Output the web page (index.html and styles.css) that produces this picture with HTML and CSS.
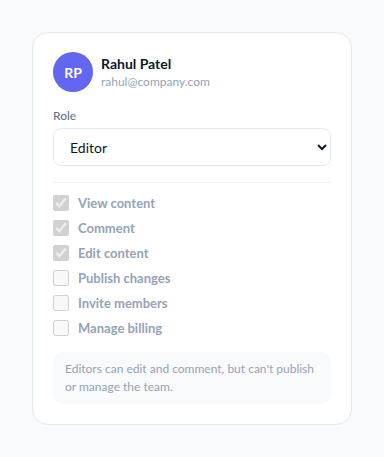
FILE: index.html
```html
<!DOCTYPE html>
<html>
<head>
    <title>Member role</title>
    <link rel="stylesheet" href="styles.css">
</head>
<body>
    <div class="card">
        <div class="member">
            <div class="avatar">RP</div>
            <div class="member-info">
                <div class="member-name">Rahul Patel</div>
                <div class="member-email">rahul@company.com</div>
            </div>
        </div>

        <label class="field-label" for="role">Role</label>
        <select id="role" class="role-select">
            <option>Viewer</option>
            <option>Commenter</option>
            <option selected>Editor</option>
            <option>Admin</option>
        </select>

        <hr class="divider">

        <ul class="perm-list">
            <li class="perm"><input type="checkbox" checked disabled><span>View content</span></li>
            <li class="perm"><input type="checkbox" checked disabled><span>Comment</span></li>
            <li class="perm"><input type="checkbox" checked disabled><span>Edit content</span></li>
            <li class="perm"><input type="checkbox" disabled><span>Publish changes</span></li>
            <li class="perm"><input type="checkbox" disabled><span>Invite members</span></li>
            <li class="perm"><input type="checkbox" disabled><span>Manage billing</span></li>
        </ul>

        <div class="note">Editors can edit and comment, but can't publish or manage the team.</div>
    </div>
</body>
</html>
```

FILE: styles.css
```css
body {
    margin: 0;
    padding: 32px;
    font-family: Lato, "Noto Sans", sans-serif;
    background-color: #f8fafc;
}

.card {
    width: 278px;
    padding: 19px 20px 20px;
    background-color: #fff;
    border: 1px solid #e2e8f0;
    border-radius: 16px;
}

.member {
    display: flex;
    align-items: center;
    gap: 8px;
}

.avatar {
    width: 40px;
    height: 40px;
    border-radius: 50%;
    background-color: #6366f1;
    color: #fff;
    font-size: 14px;
    font-weight: 700;
    display: flex;
    align-items: center;
    justify-content: center;
}

.member-name {
    font-size: 14px;
    font-weight: 700;
    color: #0f172a;
    line-height: 18px;
}

.member-email {
    font-size: 12px;
    color: #94a3b8;
    line-height: 17px;
}

.field-label {
    display: block;
    margin-top: 16px;
    font-size: 12px;
    font-weight: 500;
    color: #64748b;
    line-height: 16px;
}

.role-select {
    display: block;
    width: 100%;
    height: 38px;
    margin-top: 4px;
    padding: 0 10px 0 12px;
    font-family: inherit;
    font-size: 14px;
    color: #0f172a;
    background-color: #fff;
    border: 1px solid #e2e8f0;
    border-radius: 8px;
}

.divider {
    border: none;
    border-top: 1px solid #eef2f6;
    margin: 16px 0 10px;
}

.perm-list {
    list-style: none;
    margin: 0;
    padding: 0;
    display: flex;
    flex-direction: column;
    gap: 5px;
}

.perm {
    display: flex;
    align-items: center;
    gap: 9px;
    height: 20px;
    font-size: 13px;
    font-weight: 700;
    color: #94a3b8;
}

.perm input {
    width: 16px;
    height: 16px;
    margin: 0;
}

.note {
    margin-top: 14px;
    padding: 8px 12px;
    background-color: #f8fafc;
    border-radius: 10px;
    font-size: 12px;
    line-height: 18px;
    color: #94a3b8;
}
```
